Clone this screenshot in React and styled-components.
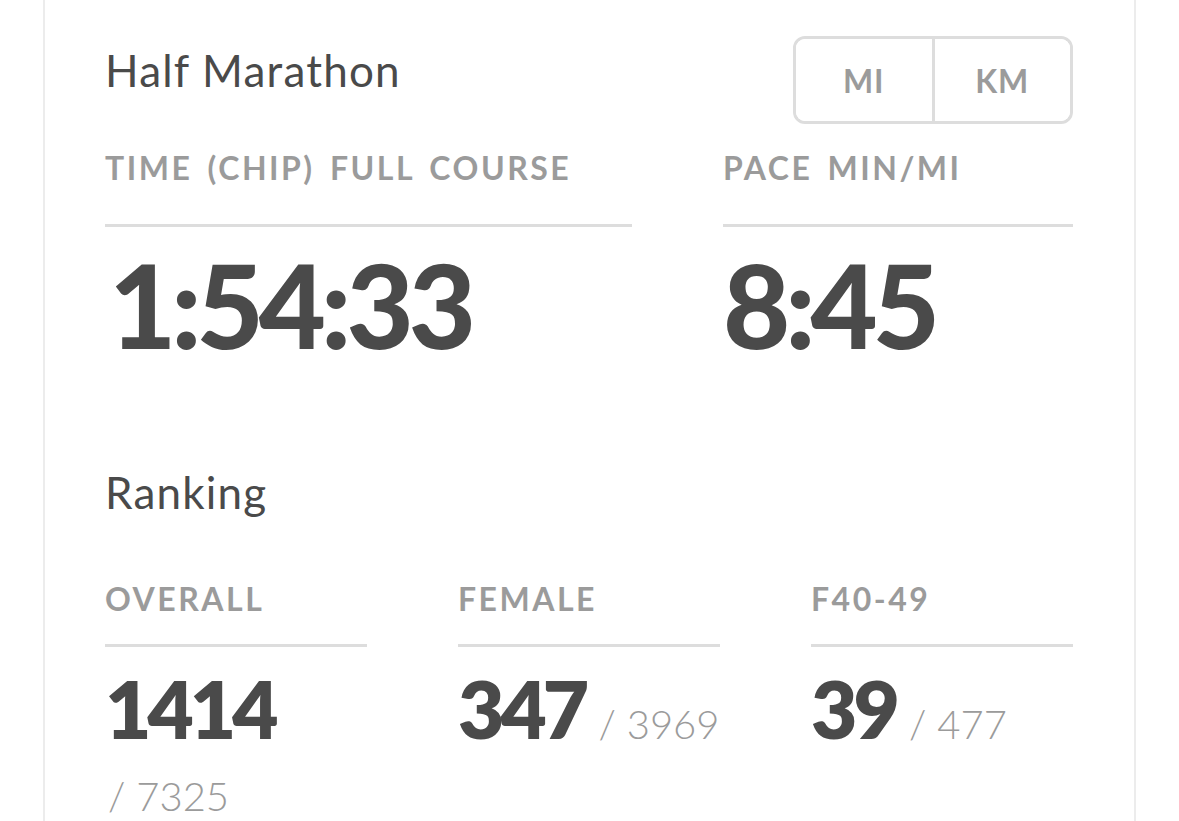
import React from "react";
import styled, { createGlobalStyle } from "styled-components";

const Global = createGlobalStyle`
  html, body { margin: 0; padding: 0; background: #ffffff; }
  body { font-family: Lato, "Open Sans", sans-serif; color: #4a4a4a; overflow: hidden; }
  * { box-sizing: border-box; }
`;

const Page = styled.div`
  width: 1179px;
  height: 821px;
  overflow: hidden;
`;

const Card = styled.section`
  margin-left: 43px;
  width: 1093px;
  min-height: 821px;
  border-left: 2px solid #ececec;
  border-right: 2px solid #ececec;
  padding: 36px 61px 0 60px;
`;

const HeaderRow = styled.div`
  display: flex;
  justify-content: space-between;
  align-items: flex-start;
`;

const Title = styled.h2`
  margin: ${(p) => p.$mt || 0}px 0 0 0;
  font-family: Lato, sans-serif;
  font-weight: 400;
  font-size: 44px;
  line-height: 1;
  color: #4a4a4a;
  letter-spacing: 1.2px;
`;

const Toggle = styled.div`
  display: flex;
  width: 280px;
  height: 88px;
  border: 3px solid #dddddd;
  border-radius: 12px;
  overflow: hidden;
`;

const ToggleButton = styled.button`
  flex: 1;
  border: none;
  background: #ffffff;
  font-family: Lato, sans-serif;
  font-weight: 700;
  font-size: 32px;
  letter-spacing: 1px;
  color: #9b9b9b;
  padding: 0;
  & + & { border-left: 3px solid #dddddd; }
`;

const StatGrid = styled.div`
  display: grid;
  grid-template-columns: ${(p) => p.$cols};
  column-gap: 91px;
  margin-top: ${(p) => p.$mt}px;
`;

const Stat = styled.div``;

const StatLabel = styled.div`
  font-family: Lato, sans-serif;
  font-weight: 700;
  font-size: 32px;
  line-height: 1;
  letter-spacing: 2.5px;
  word-spacing: 5px;
  color: #9b9b9b;
  padding-bottom: ${(p) => p.$pb}px;
  border-bottom: 3px solid #dddddd;
  white-space: nowrap;
`;

const BigValue = styled.div`
  margin-top: 20px;
  font-family: Lato, sans-serif;
  font-weight: 900;
  font-size: 116px;
  line-height: 1;
  letter-spacing: -5px;
  color: #4a4a4a;
  padding-left: ${(p) => p.$pl ?? 4}px;
`;

const RankValue = styled.div`
  margin-top: 31px;
  font-family: Lato, sans-serif;
  font-size: 40px;
  line-height: 72px;
`;

const RankNumber = styled.span`
  font-weight: 800;
  font-size: 80px;
  line-height: 60px;
  letter-spacing: -4px;
  color: #4a4a4a;
`;

const RankTotal = styled.span`
  font-weight: 300;
  font-size: 40px;
  color: #9b9b9b;
  padding-left: 3px;
  white-space: nowrap;
`;

const ranks = [
  { label: "OVERALL", value: "1414", total: "7325" },
  { label: "FEMALE", value: "347", total: "3969" },
  { label: "F40-49", value: "39", total: "477" },
];

export default function App() {
  return (
    <Page>
      <Global />
      <Card>
        <HeaderRow>
          <Title $mt={12}>Half Marathon</Title>
          <Toggle>
            <ToggleButton>MI</ToggleButton>
            <ToggleButton>KM</ToggleButton>
          </Toggle>
        </HeaderRow>

        <StatGrid $cols="527px 350px" $mt={28}>
          <Stat>
            <StatLabel $pb={40}>TIME (CHIP) FULL COURSE</StatLabel>
            <BigValue>1:54:33</BigValue>
          </Stat>
          <Stat>
            <StatLabel $pb={40}>PACE MIN/MI</StatLabel>
            <BigValue $pl={0}>8:45</BigValue>
          </Stat>
        </StatGrid>

        <Title $mt={107}>Ranking</Title>

        <StatGrid $cols="262px 262px 262px" $mt={69}>
          {ranks.map((r) => (
            <Stat key={r.label}>
              <StatLabel $pb={29}>{r.label}</StatLabel>
              <RankValue>
                <RankNumber>{r.value}</RankNumber>{" "}
                <RankTotal>/ {r.total}</RankTotal>
              </RankValue>
            </Stat>
          ))}
        </StatGrid>
      </Card>
    </Page>
  );
}
